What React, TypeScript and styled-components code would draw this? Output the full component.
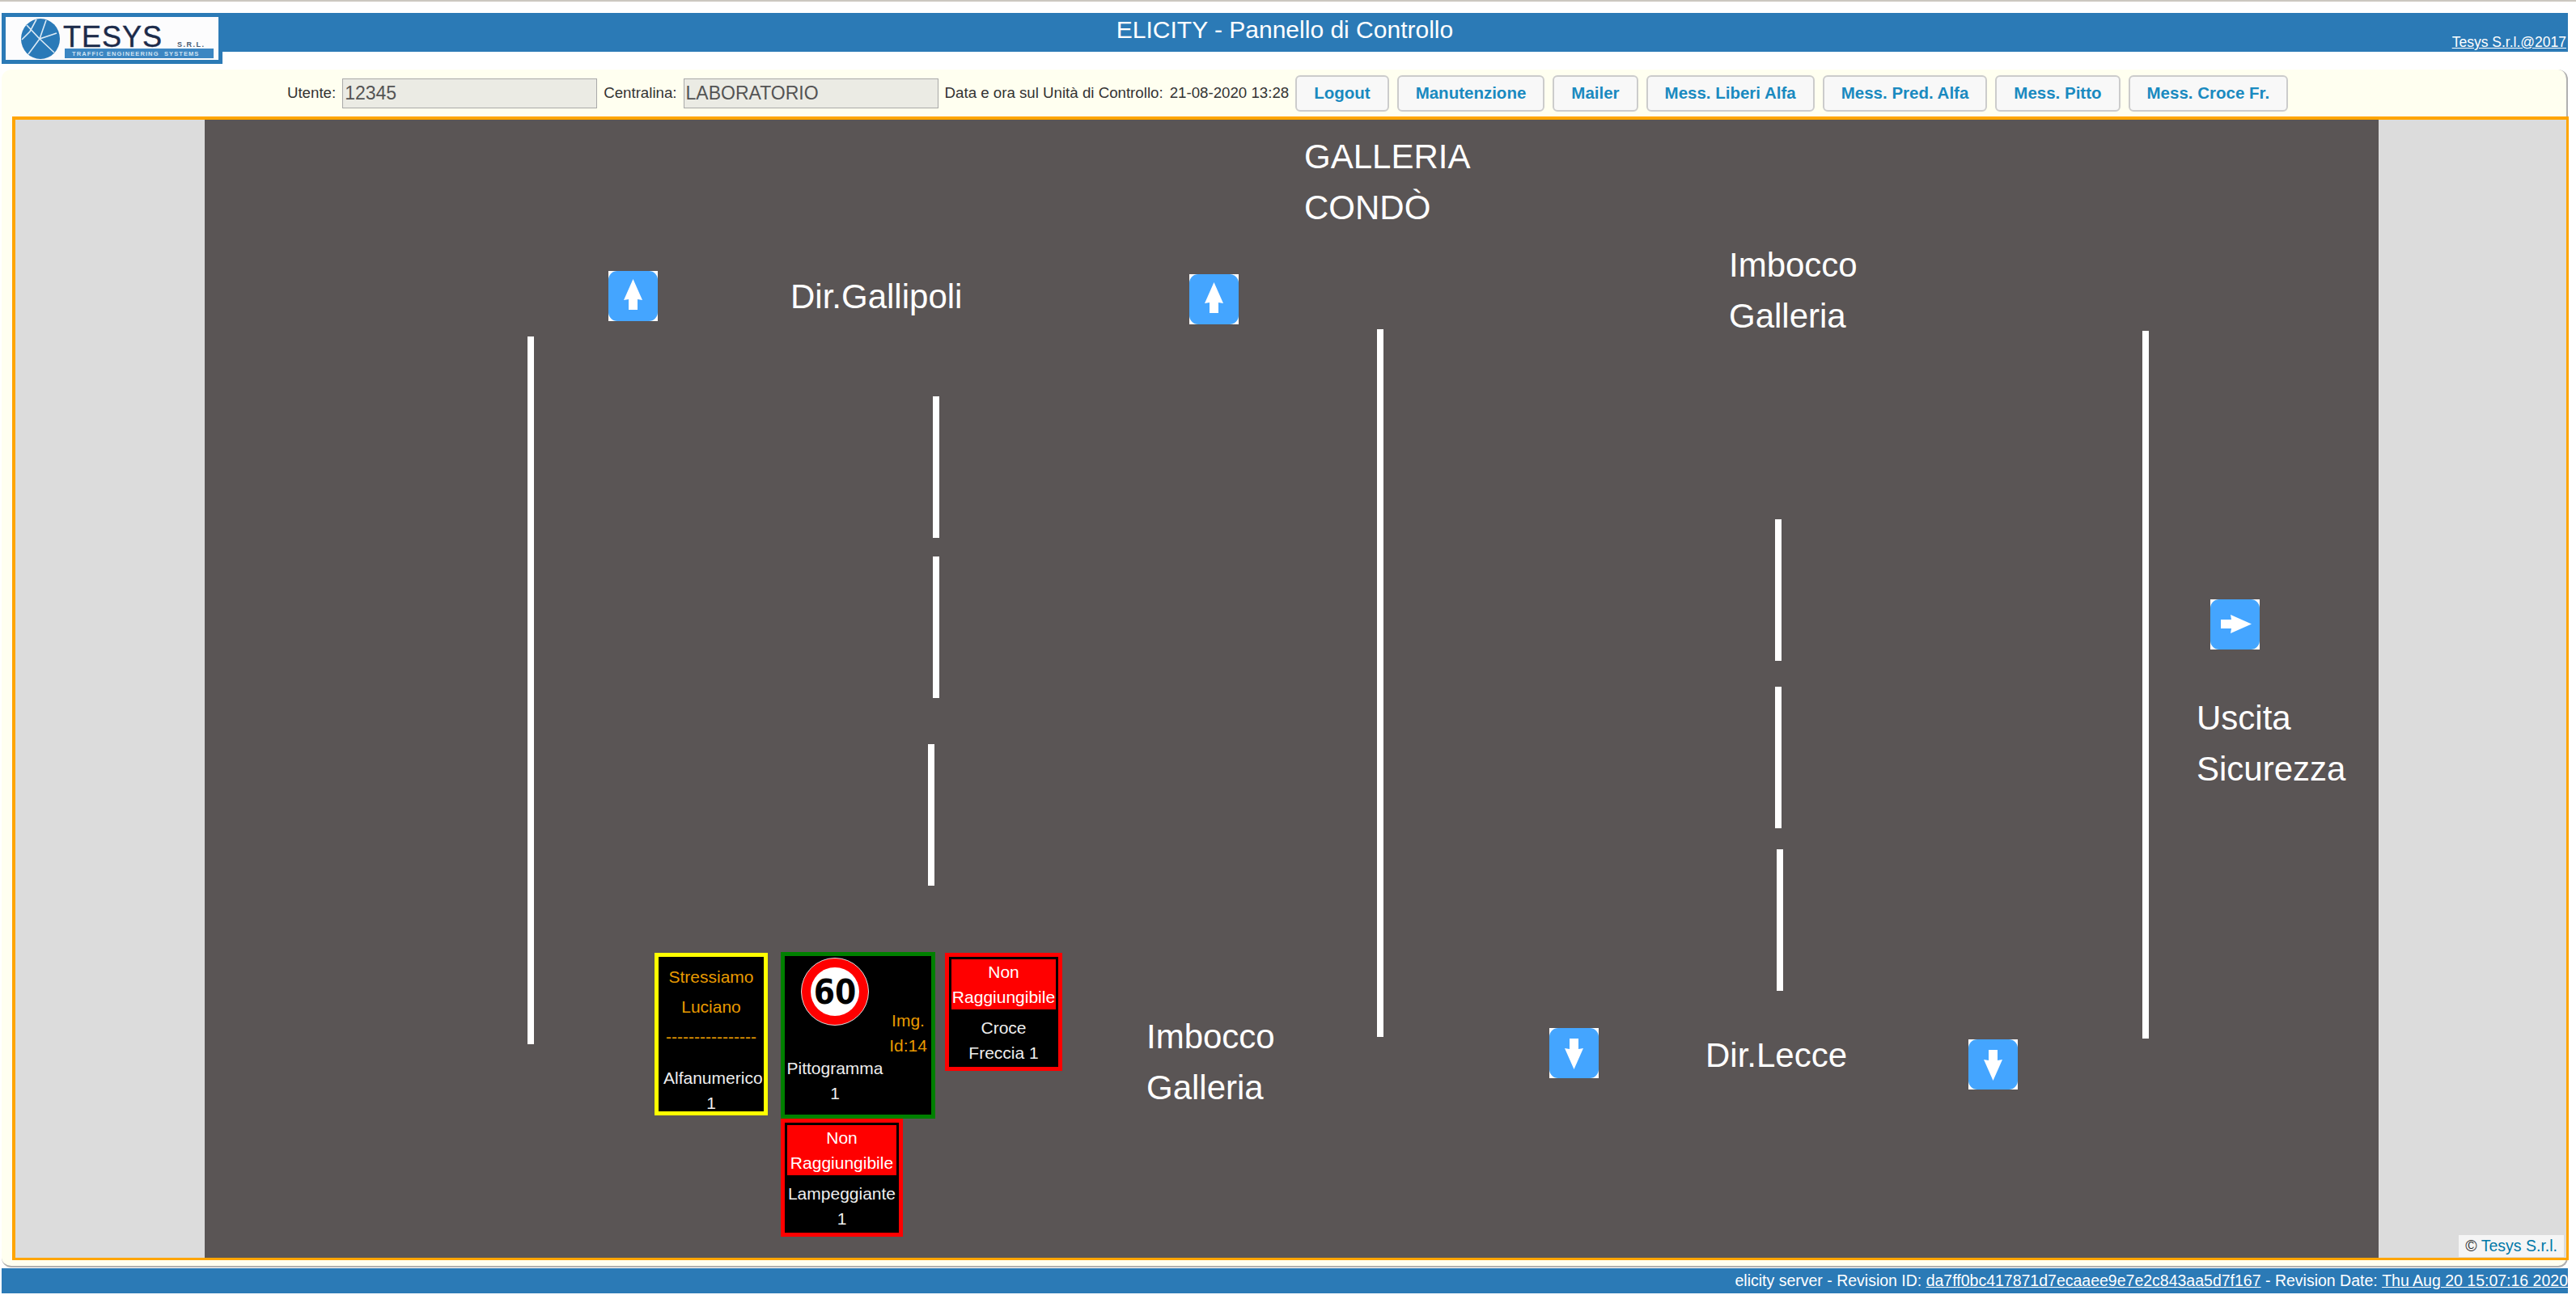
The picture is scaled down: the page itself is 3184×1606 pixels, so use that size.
import React from 'react';
import styled, { createGlobalStyle } from 'styled-components';

const GlobalStyle = createGlobalStyle`
  html, body {
    margin: 0;
    padding: 0;
    background: #fff;
  }

  body {
    font-family: 'Liberation Sans', Arial, sans-serif;
  }
`;

const FONT_ORANGE = '#e89a00';

type Direction = 'up' | 'down' | 'right';

const ARROW_ROTATION: Record<Direction, number> = { up: 0, right: 90, down: 180 };

type ArrowProps = { x: number; y: number; direction: Direction };

function ArrowMarker({ x, y, direction }: ArrowProps) {
  return (
    <StyledMarker $x={x} $y={y}>
      <svg width="61" height="62" viewBox="0 0 61 62">
        <rect width="61" height="62" fill="#fff" />
        <rect width="61" height="62" rx="11" fill="#44a5ff" />
        <path
          d="M30.5 10 L42 36 L36 35 L36 48 L25 48 L25 35 L19 36 Z"
          fill="#fff"
          transform={`rotate(${ARROW_ROTATION[direction]} 30.5 30.5)`}
        />
      </svg>
    </StyledMarker>
  );
}

function Logo() {
  return (
    <svg width="263" height="53" viewBox="0 0 263 53">
      <rect width="263" height="53" fill="#fcfcfd" />
      <g filter="url(#soft)">
        <ellipse cx="43" cy="27" rx="24" ry="25" fill="#2a7ab8" />
        <path
          d="M26 10 L42 27 L63 20 M42 27 L28 46 M42 27 L60 44 M38 3 L30 18 L20 28 M42 27 L50 4"
          stroke="#dceaf5"
          strokeWidth="1.6"
          fill="none"
        />
        <rect x="73" y="39" width="184" height="12" fill="#3a86c2" />
      </g>
      <StyledLogoName x="71" y="37">TESYS</StyledLogoName>
      <StyledLogoSuffix x="212" y="37">S.R.L.</StyledLogoSuffix>
      <StyledLogoTag x="82" y="48">TRAFFIC ENGINEERING  SYSTEMS</StyledLogoTag>
      <defs>
        <filter id="soft">
          <feGaussianBlur stdDeviation="0.5" />
        </filter>
      </defs>
    </svg>
  );
}

function SpeedSign() {
  return (
    <svg width="84" height="84" viewBox="0 0 84 84">
      <circle cx="42" cy="42" r="41.5" fill="#f00" stroke="#ddd" strokeWidth="1" />
      <circle cx="42" cy="42" r="30" fill="#fff" />
      <StyledSignText x="42" y="57">60</StyledSignText>
    </svg>
  );
}

const BUTTONS = ['Logout', 'Manutenzione', 'Mailer', 'Mess. Liberi Alfa', 'Mess. Pred. Alfa', 'Mess. Pitto', 'Mess. Croce Fr.'];

const SOLID_LINES = [
  { x: 652, top: 416, height: 875 },
  { x: 1702, top: 407, height: 875 },
  { x: 2648, top: 409, height: 875 },
];

const DASHES = [
  { x: 1153, top: 490 },
  { x: 1153, top: 688 },
  { x: 1147, top: 920 },
  { x: 2194, top: 642 },
  { x: 2194, top: 849 },
  { x: 2196, top: 1050 },
];

const ARROWS: ArrowProps[] = [
  { x: 752, y: 335, direction: 'up' },
  { x: 1470, y: 339, direction: 'up' },
  { x: 2732, y: 741, direction: 'right' },
  { x: 1915, y: 1271, direction: 'down' },
  { x: 2433, y: 1285, direction: 'down' },
];

const LABELS = [
  { x: 1612, y: 162, lines: ['GALLERIA', 'CONDÒ'] },
  { x: 977, y: 335, lines: ['Dir.Gallipoli'] },
  { x: 2137, y: 296, lines: ['Imbocco', 'Galleria'] },
  { x: 2715, y: 856, lines: ['Uscita', 'Sicurezza'] },
  { x: 1417, y: 1250, lines: ['Imbocco', 'Galleria'] },
  { x: 2108, y: 1273, lines: ['Dir.Lecce'] },
];

function App() {
  return (
    <>
      <GlobalStyle />
      <StyledPage>
        <StyledHeader>
          <StyledLogoBox>
            <Logo />
          </StyledLogoBox>
          <StyledTitle>ELICITY - Pannello di Controllo</StyledTitle>
          <StyledHeaderLink>Tesys S.r.l.@2017</StyledHeaderLink>
        </StyledHeader>

        <StyledPanel>
          <StyledToolbar>
            <StyledLabel>Utente:</StyledLabel>
            <StyledInput readOnly value="12345" />
            <StyledLabel>Centralina:</StyledLabel>
            <StyledInput readOnly value="LABORATORIO" />
            <StyledLabel>Data e ora sul Unità di Controllo:</StyledLabel>
            <StyledLabel>21-08-2020 13:28</StyledLabel>
            <StyledButtons>
              {BUTTONS.map((label) => (
                <StyledButton key={label}>{label}</StyledButton>
              ))}
            </StyledButtons>
          </StyledToolbar>

          <StyledMapFrame>
            <StyledRoad />

            {SOLID_LINES.map((line) => (
              <StyledLine key={line.x} $x={line.x} $top={line.top} $height={line.height} />
            ))}
            {DASHES.map((dash) => (
              <StyledLine key={`${dash.x}-${dash.top}`} $x={dash.x} $top={dash.top} $height={175} />
            ))}
            {ARROWS.map((arrow) => (
              <ArrowMarker key={`${arrow.x}-${arrow.y}`} {...arrow} />
            ))}
            {LABELS.map((label) => (
              <StyledMapLabel key={`${label.x}-${label.y}`} $x={label.x} $y={label.y}>
                {label.lines.map((line) => (
                  <div key={line}>{line}</div>
                ))}
              </StyledMapLabel>
            ))}

            <StyledTile $x={809} $y={1178} $w={140} $h={201} $color="#ff0" $pad={6}>
              <StyledMessageLine>Stressiamo</StyledMessageLine>
              <StyledMessageLine>Luciano</StyledMessageLine>
              <StyledMessageLine>----------------</StyledMessageLine>
              <StyledTileName $gap={17}>
                Alfanumerico
                <br />1
              </StyledTileName>
            </StyledTile>

            <StyledTile $x={965} $y={1177} $w={191} $h={206} $color="#008000" $pad={0}>
              <StyledSignColumn>
                <SpeedSign />
                <StyledTileName $gap={0}>
                  Pittogramma
                  <br />1
                </StyledTileName>
              </StyledSignColumn>
              <StyledImageId>
                Img.
                <br />
                Id:14
              </StyledImageId>
            </StyledTile>

            <StyledTile $x={1168} $y={1178} $w={145} $h={146} $color="#f00" $pad={3}>
              <StyledAlarm>
                Non
                <br />
                Raggiungibile
              </StyledAlarm>
              <StyledTileName $gap={7}>
                Croce
                <br />
                Freccia 1
              </StyledTileName>
            </StyledTile>

            <StyledTile $x={965} $y={1383} $w={151} $h={146} $color="#f00" $pad={3}>
              <StyledAlarm>
                Non
                <br />
                Raggiungibile
              </StyledAlarm>
              <StyledTileName $gap={7}>
                Lampeggiante
                <br />1
              </StyledTileName>
            </StyledTile>

            <StyledAttribution>
              © <StyledAttributionLink>Tesys S.r.l.</StyledAttributionLink>
            </StyledAttribution>
          </StyledMapFrame>
        </StyledPanel>

        <StyledFooter>
          elicity server - Revision ID:&nbsp;
          <StyledFooterLink>da7ff0bc417871d7ecaaee9e7e2c843aa5d7f167</StyledFooterLink>
          &nbsp;- Revision Date:&nbsp;
          <StyledFooterLink>Thu Aug 20 15:07:16 2020</StyledFooterLink>
        </StyledFooter>
      </StyledPage>
    </>
  );
}

const StyledPage = styled.div`
  width: 3184px;
  height: 1606px;
  box-sizing: border-box;
  padding: 16px 10px 0 2px;
  overflow: hidden;
  border-top: 2px solid #ccc8c0;
  padding-top: 14px;
`;

const StyledHeader = styled.header`
  position: relative;
  height: 48px;
  display: flex;
  align-items: center;
  justify-content: center;
  background: #2b7ab6;
  color: #fff;
`;

const StyledLogoBox = styled.div`
  position: absolute;
  left: 0;
  top: 0;
  width: 263px;
  height: 53px;
  border: 5px solid #2b7ab6;
  font-size: 0;
`;

const StyledLogoName = styled.text`
  font-family: 'Liberation Sans', sans-serif;
  font-size: 36px;
  letter-spacing: 1px;
  fill: #1c2b4a;
  stroke: #1c2b4a;
  stroke-width: 0.4px;
`;

const StyledLogoSuffix = styled.text`
  font-family: 'Liberation Sans', sans-serif;
  font-size: 9px;
  font-weight: bold;
  letter-spacing: 1.5px;
  fill: #4a5a70;
`;

const StyledLogoTag = styled.text`
  font-family: 'Liberation Sans', sans-serif;
  font-size: 7.5px;
  font-weight: bold;
  letter-spacing: 1.1px;
  white-space: pre;
  fill: #cfe3f3;
`;

const StyledTitle = styled.h1`
  margin: 0 0 6px;
  font-size: 30px;
  font-weight: normal;
`;

const StyledHeaderLink = styled.a`
  position: absolute;
  right: 2px;
  bottom: 1px;
  font-size: 17.5px;
  color: #fff;
  text-decoration: underline;
`;

const StyledPanel = styled.main`
  margin-top: 22px;
  height: 1481px;
  box-sizing: border-box;
  padding: 0 4px 0 13px;
  background: #fffff0;
  border-right: 2px solid #b0b0b0;
  border-bottom: 2px solid #b0b0b0;
  border-radius: 12px;
`;

const StyledToolbar = styled.div`
  height: 58px;
  display: flex;
  align-items: center;
  justify-content: center;
  gap: 8px;
  color: #333;
`;

const StyledLabel = styled.span`
  font-size: 18.7px;
  white-space: nowrap;
`;

const StyledInput = styled.input`
  width: 315px;
  height: 37px;
  box-sizing: border-box;
  padding: 0 2px;
  border: 1px solid #a9a9a9;
  background: #ebebe4;
  color: #545454;
  font-family: 'Liberation Sans', sans-serif;
  font-size: 23px;
`;

const StyledButtons = styled.div`
  display: flex;
  gap: 10px;
  margin-left: 0;
`;

const StyledButton = styled.button`
  height: 45px;
  padding: 0 21px;
  border: 2px solid #ccc;
  border-radius: 6px;
  background: #f8f8f8;
  color: #1a8ac0;
  font-family: 'Liberation Sans', sans-serif;
  font-size: 20.5px;
  font-weight: bold;
  white-space: nowrap;
`;

const StyledMapFrame = styled.div`
  position: relative;
  width: 3153px;
  height: 1407px;
  box-sizing: content-box;
  margin-left: 0;
  border: solid #ffa500;
  border-width: 4px 3px 3px 4px;
  background: #dcdcdc;
  overflow: hidden;
`;

// Items below are pinned to the map, so they take page coordinates minus the frame's origin.
const ORIGIN_X = 19;
const ORIGIN_Y = 148;

const StyledRoad = styled.div`
  position: absolute;
  left: ${253 - ORIGIN_X}px;
  top: 0;
  width: 2687px;
  height: 100%;
  background: #5a5555;
`;

const StyledLine = styled.div<{ $x: number; $top: number; $height: number }>`
  position: absolute;
  left: ${({ $x }) => $x - ORIGIN_X}px;
  top: ${({ $top }) => $top - ORIGIN_Y}px;
  width: 8px;
  height: ${({ $height }) => $height}px;
  background: #fff;
`;

const StyledMarker = styled.div<{ $x: number; $y: number }>`
  position: absolute;
  left: ${({ $x }) => $x - ORIGIN_X}px;
  top: ${({ $y }) => $y - ORIGIN_Y}px;
  font-size: 0;
`;

const StyledMapLabel = styled.div<{ $x: number; $y: number }>`
  position: absolute;
  left: ${({ $x }) => $x - ORIGIN_X}px;
  top: ${({ $y }) => $y - ORIGIN_Y}px;
  color: #fff;
  font-size: 42px;
  line-height: 63px;
  white-space: nowrap;
`;

const StyledTile = styled.div<{ $x: number; $y: number; $w: number; $h: number; $color: string; $pad: number }>`
  position: absolute;
  left: ${({ $x }) => $x - ORIGIN_X}px;
  top: ${({ $y }) => $y - ORIGIN_Y}px;
  width: ${({ $w }) => $w}px;
  height: ${({ $h }) => $h}px;
  box-sizing: border-box;
  display: flex;
  flex-direction: ${({ $pad }) => ($pad === 0 ? 'row' : 'column')};
  padding: ${({ $pad }) => $pad}px;
  border: 5px solid ${({ $color }) => $color};
  background: #000;
  color: #eee;
  font-size: 21px;
  line-height: 31px;
  text-align: center;
  white-space: nowrap;
`;

const StyledMessageLine = styled.div`
  height: 37px;
  line-height: 37px;
  color: ${FONT_ORANGE};
`;

const StyledTileName = styled.div<{ $gap: number }>`
  margin-top: ${({ $gap }) => $gap}px;
`;

const StyledAlarm = styled.div`
  background: #f00;
  color: #fff;
`;

const StyledSignColumn = styled.div`
  width: 124px;
  display: flex;
  flex-direction: column;
  align-items: center;
  gap: 37px;
  padding-top: 2px;
`;

const StyledImageId = styled.div`
  flex: 1;
  margin-top: 64px;
  color: ${FONT_ORANGE};
`;

const StyledSignText = styled.text`
  font-family: 'DejaVu Sans', sans-serif;
  font-size: 42px;
  font-weight: bold;
  text-anchor: middle;
  font-stretch: condensed;
  fill: #000;
`;

const StyledAttribution = styled.div`
  position: absolute;
  right: 3px;
  bottom: 1px;
  height: 27px;
  padding: 0 8px;
  background: rgba(255, 255, 255, 0.7);
  color: #333;
  font-size: 19.5px;
  line-height: 27px;
`;

const StyledAttributionLink = styled.a`
  color: #0078a8;
`;

const StyledFooter = styled.footer`
  height: 31px;
  margin-top: 1px;
  display: flex;
  align-items: center;
  justify-content: flex-end;
  background: #2b7ab6;
  color: #fff;
  font-size: 19.5px;
  white-space: pre;
`;

const StyledFooterLink = styled.a`
  color: #fff;
  text-decoration: underline;
`;

export default App;
